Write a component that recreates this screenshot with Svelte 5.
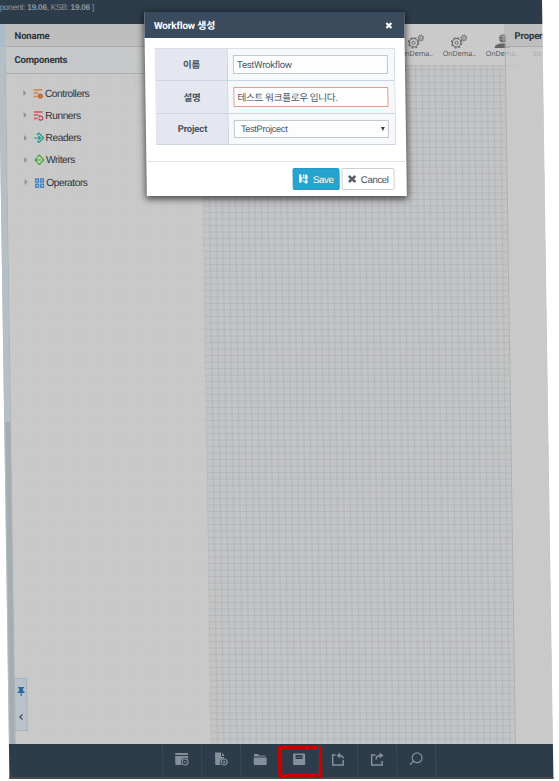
<script>
  const groups = ['Controllers', 'Runners', 'Readers', 'Writers', 'Operators'];
  const tools = ['window', 'file', 'folder', 'save', 'import', 'export', 'search'];
  let name = $state('TestWrokflow');
  let description = $state('테스트 워크플로우 입니다.');
</script>

{#snippet gears()}
  <svg class="gears" width="17" height="15" viewBox="0 0 17 15" fill="none" stroke="#626467">
    <circle cx="6" cy="8.8" r="4.2" stroke-width="1" />
    <circle cx="6" cy="8.8" r="5.2" stroke-width="1" stroke-dasharray="2.1 2" />
    <circle cx="6" cy="8.8" r="1.6" stroke-width=".9" />
    <circle cx="13.3" cy="4" r="2.3" stroke-width=".9" />
    <circle cx="13.3" cy="4" r="3" stroke-width=".8" stroke-dasharray="1.2 1.1" />
    <circle cx="13.3" cy="4" r=".6" stroke-width=".6" />
  </svg>
{/snippet}

<div class="page">
  <header><span>ponent: <b>19.06</b>, KSB: <b>19.06</b> ]</span></header>

  <main>
    <div class="rail"><i></i><div></div></div>
    <aside class="components">
      <h2 class="name">Noname</h2>
      <h2 class="title">Components</h2>
      <ul>
        {#each groups as group}
          <li>
            <span class="arrow"></span>
            <svg width="10" height="11" viewBox="0 0 10 11" fill="none">
              {#if group === 'Controllers'}
                <path d="M0 2h9M0 5h5M0 8.500h4" stroke="#d08440" stroke-width="1.600" />
                <circle cx="7" cy="8" r="1.500" stroke="#bd6b36" stroke-width="2.200" />
              {:else if group === 'Runners'}
                <path d="M0 2h9M0 5h5M0 8.500h4" stroke="#c9545a" stroke-width="1.600" />
                <path d="M5.500 5.500v2M5.200 6.200h2a2 2 0 1 1-2 2.600" stroke="#b83f50" stroke-width="1.200" />
              {:else if group === 'Readers'}
                <path d="M0 6h6.500M4.300 3.800 6.500 6 4.300 8.200M3 3l2-2 4.600 5L5 10.500 3 9" stroke="#20998a" stroke-width="1.200" />
              {:else if group === 'Writers'}
                <path d="M7 6H.5M3 3.800.7 6 3 8.200M3 3l2-2 4.600 5L5 10.500 3 9" stroke="#42a832" stroke-width="1.200" />
              {:else}
                <path d="M1 2h2.800v3H1zM6 2h2.800v3H6zM1 7.200h2.800v3H1zM6 7.200h2.800v3H6z" stroke="#4b86c3" stroke-width="1.500" />
              {/if}
            </svg>
            <span class="group">{group}</span>
          </li>
        {/each}
      </ul>
      <div class="dock">
        <svg width="8" height="9" viewBox="0 0 8 9"><path d="M1 0h6v1.300H6V4l1.500 1v1H4.600v3H3.400V6H.5V5L2 4V1.300H1z" fill="#2d69a3" /></svg>
        <svg width="5" height="6" viewBox="0 0 5 6"><path d="M4 .5 1.300 3 4 5.500" fill="none" stroke="#3d4650" stroke-width="1.100" /></svg>
      </div>
    </aside>

    <section class="canvas">
      <div class="palette">
        <div class="node">{@render gears()}<span>OnDema..</span></div>
        <div class="node">{@render gears()}<span>OnDema..</span></div>
        <div class="node">
          <svg width="17" height="15" viewBox="0 0 17 15" fill="#626467">
            <circle cx="9.500" cy="4.500" r="4" /><path d="M1 14c0-3.500 3-3.500 5.500-4.500h6c3 1 4 1.500 4 4.500z" />
            <path d="M6.500 2.500h6M5.500 5h8M9.500 0v9" stroke="#b5b5b5" stroke-width=".7" />
          </svg>
          <span>OnDema..</span>
        </div>
      </div>
    </section>

    <aside class="properties">
      <h2 class="name">Proper</h2>
      <span>Str</span>
    </aside>
  </main>

  <footer>
    {#each tools as tool}
      <button class="tool" aria-label={tool}>
        <svg width="14" height="14" viewBox="0 0 14 14" fill="#84909a">
          {#if tool === 'window'}
            <path d="M1 1h11a1 1 0 0 1 1 1v1H0V2a1 1 0 0 1 1-1zM0 4h13v3a4 4 0 0 0-6 6H1a1 1 0 0 1-1-1z" />
            <circle cx="10" cy="10" r="3" fill="none" stroke="#84909a" /><path d="M8.500 9.500h3v1h-3z" />
          {:else if tool === 'file'}
            <path d="M1 .5h6V5h3v1.500A4 4 0 0 0 6.500 13H2a1 1 0 0 1-1-1zM8 .5 10.500 4H8z" />
            <circle cx="10" cy="10" r="3" fill="none" stroke="#84909a" stroke-width="1.200" /><path d="M8.500 9.500h1v-1h1v1h1v1h-1v1h-1v-1h-1z" />
          {:else if tool === 'folder'}
            <path d="M1 2h4l1 1.500h6.500V4.500H1zM.5 5.500h13V12a1 1 0 0 1-1 1h-11a1 1 0 0 1-1-1z" />
          {:else if tool === 'save'}
            <path fill-rule="evenodd" d="M2 1.500h10a1 1 0 0 1 1 1V12a1 1 0 0 1-1 1H2a1 1 0 0 1-1-1V2.500a1 1 0 0 1 1-1zM3.500 3v4h7V3z" />
            <path d="M4.500 4.500h5V6h-5z" opacity=".35" />
          {:else if tool === 'import'}
            <path d="M4.500 3H1.500v10h10.500V8M12 6.500c0-2-1.500-3-4-3" fill="none" stroke="#84909a" stroke-width="1.500" /><path d="M9 .5v6L5.500 3.500z" />
          {:else if tool === 'export'}
            <path d="M5.500 3h-4v10h10.500V9M6 7.500c0-2.500 1.500-4 4-4" fill="none" stroke="#84909a" stroke-width="1.500" /><path d="M9.500.5v6L13.500 3.500z" />
          {:else}
            <path d="M4.500 9 .8 12.700" stroke="#84909a" stroke-width="1.400" /><circle cx="8" cy="5.800" r="4.900" fill="none" stroke="#84909a" stroke-width="1.200" />
          {/if}
        </svg>
        {#if tool === 'save'}<span class="mark"></span>{/if}
      </button>
    {/each}
  </footer>

  <div class="dialog" role="dialog" aria-label="Workflow 생성">
    <div class="dialog-head">
      <span>Workflow 생성</span>
      <svg width="7" height="7" viewBox="0 0 7 7"><path d="m1 1 5 5M6 1 1 6" stroke="#fff" stroke-width="2.200" /></svg>
    </div>
    <div class="form">
      <label for="wf-name">이름</label>
      <div class="field"><input id="wf-name" bind:value={name} /></div>
      <label for="wf-desc">설명</label>
      <div class="field"><input id="wf-desc" class="active" bind:value={description} /></div>
      <span class="label">Project</span>
      <div class="field"><div class="select"><span>TestProjcect</span><i></i></div></div>
    </div>
    <div class="actions">
      <button class="save">
        <svg width="10" height="10" viewBox="0 0 10 10" fill="#fff"><path d="M.5.500h2.300V3.500h3.700v-3H8l1 1V5.500H7.800V4.500H3V8.500H.5zM6.600 5.500h1.600V7.300H9.800L7.400 9.900 5 7.300h1.600zM4.500.500h1.200V2.800H4.500zM3.700 6.500h1.600v1H3.700z" /></svg>
        Save
      </button>
      <button class="cancel">
        <svg width="9" height="8" viewBox="0 0 9 8"><path d="m1.200 1 6.600 6M7.800 1 1.200 7" stroke="#5b6066" stroke-width="2.500" /></svg>
        Cancel
      </button>
    </div>
  </div>
</div>

<style>
  :global(body) { background: #fff; overflow: hidden; }
  * { box-sizing: border-box; }
  .page {
    position: relative;
    width: 544px;
    height: 779px;
    margin-left: -2px;
    transform: skewX(.84deg);
    transform-origin: 0 0;
    font-family: "Liberation Sans", "Noto Sans CJK KR", sans-serif;
    color: #303540;
  }
  svg { display: block; flex: none; }
  header {
    height: 24px;
    padding: 1px 0 0 1.500px;
    background: #2d3c4b;
    color: #8d969f;
    font-size: 8.400px;
    line-height: 13px;
    letter-spacing: -.32px;
  }
  main { display: flex; height: 720px; background: #c9c9c9; }
  .rail { width: 7px; display: flex; flex-direction: column; background: #b4bfc6; border-right: 1px solid #adb5bb; }
  .rail i { height: 22px; background: #a8bccb; }
  .rail div { margin: 376px 0 0 1px; flex: 1; background: #a6adb1; }
  h2 { margin: 0; font: 700 9.600px/23px Roboto, "Liberation Sans", sans-serif; letter-spacing: -.2px; white-space: nowrap; }
  .name { height: 23px; padding-left: 9px; background: #bebebf; border-bottom: 1px solid #aaacae; }
  .components {
    width: 195px;
    display: flex;
    flex-direction: column;
    background-color: #c9c9c9;
    background-image:
      repeating-linear-gradient(90deg, transparent 0 12px, #c6c6c7 12px 13px),
      repeating-linear-gradient(0deg, transparent 0 12px, #c6c6c7 12px 13px);
  }
  .title { height: 27px; line-height: 26px; padding-left: 8.500px; background: #c6c7c8; border-bottom: 1px solid #abadaf; }
  ul { list-style: none; margin: 8px 0 0; padding: 0; }
  li { display: flex; align-items: center; height: 22.250px; padding-left: 17px; font-size: 10.300px; }
  .arrow { border: 3px solid transparent; border-left: 3.500px solid #8f9193; border-right: 0; margin-right: 7px; }
  .group { margin-left: 1.500px; letter-spacing: -.5px; }
  .dock {
    width: 13px;
    height: 53px;
    margin: auto 0 13px -1px;
    padding: 8px 0 10px;
    display: flex;
    flex-direction: column;
    align-items: center;
    justify-content: space-between;
    background: #b9c2cb;
    border: 1px solid #a9b3bd;
  }
  .canvas {
    width: 304px;
    background-color: #c3c4c6;
    background-image:
      repeating-linear-gradient(90deg, rgba(0, 0, 0, .055) 0, transparent 1.200px, transparent 5.300px, rgba(0, 0, 0, .055) 6.500px),
      repeating-linear-gradient(180deg, rgba(0, 0, 0, .055) 0, transparent 1.200px, transparent 5.300px, rgba(0, 0, 0, .055) 6.500px);
  }
  .palette { height: 42px; display: flex; justify-content: flex-end; margin-right: -19px; background: #cacaca; border-bottom: 1px solid #b4b5b6; }
  .node { width: 43px; padding-top: 10px; display: flex; flex-direction: column; align-items: center; }
  .node span { font: 7.200px/9px "Open Sans", sans-serif; color: #505154; letter-spacing: -.05px; }
  .properties {
    position: relative;
    flex: 1;
    min-width: 0;
    overflow: hidden;
    border-left: 1px solid #b0b1b2;
    background: rgba(201, 201, 201, .72);
    background-clip: padding-box;
  }
  .properties span { display: block; padding: 2px 0 0 27px; font: 7px/10px "Open Sans", sans-serif; color: #aaa; }
  footer { height: 35px; display: flex; padding-left: 153px; background: #2d3c4a; border-bottom: 2px solid #484a4b; }
  .tool { position: relative; width: 39px; padding: 0 0 3px; border: 0; border-left: 1px solid #384855; background: none; display: flex; align-items: center; justify-content: center; }
  .tool:last-child { width: 40px; border-right: 1px solid #384855; }
  .mark { position: absolute; left: -2px; top: 2px; width: 44px; height: 32px; border: 4px solid #c90000; border-radius: 1px; }
  .dialog {
    position: absolute;
    left: 146px;
    top: 12px;
    width: 260px;
    height: 184px;
    display: flex;
    flex-direction: column;
    background: #fff;
    box-shadow: 0 2px 7px 1px rgba(0, 0, 0, .65);
  }
  .dialog-head {
    height: 26px;
    padding: 0 12px 0 9.500px;
    display: flex;
    align-items: center;
    justify-content: space-between;
    background: #394b5c;
    color: #fff;
    font: 700 10px/27px Roboto, "Noto Sans CJK KR", sans-serif;
    letter-spacing: -.17px;
  }
  .form {
    margin: 10px 10px 0;
    height: 97px;
    display: grid;
    grid-template-columns: 72px 1fr;
    grid-template-rows: 32px 33px 31px;
    border-top: 1px solid #d8dfe7;
    border-right: 1px solid #d3dbe4;
    border-left: 1px solid #dce1e9;
  }
  .form label, .label {
    display: flex;
    align-items: center;
    justify-content: center;
    padding-bottom: 1px;
    background: #e4e7ef;
    border-right: 1px solid #cbd5e0;
    border-bottom: 1px solid #cbd5e0;
    color: #455362;
    font: 700 9.500px Roboto, "Noto Sans CJK KR", sans-serif;
    letter-spacing: -.15px;
  }
  .field { padding: 6px 6px 0 5px; background: #f6f8fb; border-bottom: 1px solid #cbd5e0; }
  input, .select {
    display: block;
    width: 100%;
    height: 19px;
    margin: 0;
    padding: 0 3px 1px;
    border: 1px solid #c3c8cd;
    border-radius: 0;
    background: #fdfdfe;
    color: #4a5866;
    outline: 0;
    font: 9.700px Roboto, "Noto Sans CJK KR", sans-serif;
    letter-spacing: -.38px;
  }
  input.active { height: 20px; border-color: #e09e8c; border-radius: 1px; letter-spacing: -.38px; }
  .select { height: 18px; display: flex; align-items: center; justify-content: space-between; padding: 0 3px 0 6px; font: 9.300px "Liberation Sans", sans-serif; letter-spacing: -.35px; }
  .select i { border: 2.300px solid transparent; border-top: 4px solid #394149; border-bottom: 0; }
  .actions { margin-top: auto; height: 35px; padding: 6px 12px 0 0; display: flex; justify-content: flex-end; gap: 2px; border-top: 1px solid #e1e3e5; }
  .actions button { height: 22px; padding: 0; display: flex; align-items: center; justify-content: center; gap: 4px; border-radius: 2px; font: 9.800px "Liberation Sans", sans-serif; letter-spacing: -.45px; }
  .save { width: 47px; border: 1px solid #219bc7; background: #28a2cf; color: #fff; }
  .cancel { width: 53px; border: 1px solid #cccfd2; background: #fff; color: #4b535b; }
</style>
